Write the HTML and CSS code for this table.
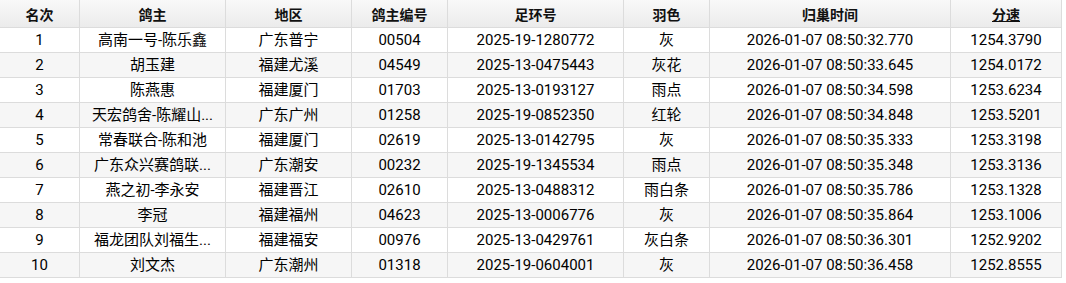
FILE: index.html
```html
<!DOCTYPE html>
<html lang="zh-CN">
<head>
<meta charset="utf-8">
<title>归巢成绩</title>
<link rel="stylesheet" href="styles.css">
</head>
<body>
<table class="grid">
  <colgroup>
    <col class="c-rank"><col class="c-owner"><col class="c-area"><col class="c-no">
    <col class="c-ring"><col class="c-color"><col class="c-time"><col class="c-speed">
  </colgroup>
  <thead>
    <tr>
      <th>名次</th><th>鸽主</th><th>地区</th><th>鸽主编号</th><th>足环号</th><th>羽色</th><th>归巢时间</th><th class="sorted">分速</th>
    </tr>
  </thead>
  <tbody>
    <tr><td>1</td><td>高南一号-陈乐鑫</td><td>广东普宁</td><td>00504</td><td>2025-19-1280772</td><td>灰</td><td>2026-01-07 08:50:32.770</td><td>1254.3790</td></tr>
    <tr><td>2</td><td>胡玉建</td><td>福建尤溪</td><td>04549</td><td>2025-13-0475443</td><td>灰花</td><td>2026-01-07 08:50:33.645</td><td>1254.0172</td></tr>
    <tr><td>3</td><td>陈燕惠</td><td>福建厦门</td><td>01703</td><td>2025-13-0193127</td><td>雨点</td><td>2026-01-07 08:50:34.598</td><td>1253.6234</td></tr>
    <tr><td>4</td><td>天宏鸽舍-陈耀山...</td><td>广东广州</td><td>01258</td><td>2025-19-0852350</td><td>红轮</td><td>2026-01-07 08:50:34.848</td><td>1253.5201</td></tr>
    <tr><td>5</td><td>常春联合-陈和池</td><td>福建厦门</td><td>02619</td><td>2025-13-0142795</td><td>灰</td><td>2026-01-07 08:50:35.333</td><td>1253.3198</td></tr>
    <tr><td>6</td><td>广东众兴赛鸽联...</td><td>广东潮安</td><td>00232</td><td>2025-19-1345534</td><td>雨点</td><td>2026-01-07 08:50:35.348</td><td>1253.3136</td></tr>
    <tr><td>7</td><td>燕之初-李永安</td><td>福建晋江</td><td>02610</td><td>2025-13-0488312</td><td>雨白条</td><td>2026-01-07 08:50:35.786</td><td>1253.1328</td></tr>
    <tr><td>8</td><td>李冠</td><td>福建福州</td><td>04623</td><td>2025-13-0006776</td><td>灰</td><td>2026-01-07 08:50:35.864</td><td>1253.1006</td></tr>
    <tr><td>9</td><td>福龙团队刘福生...</td><td>福建福安</td><td>00976</td><td>2025-13-0429761</td><td>灰白条</td><td>2026-01-07 08:50:36.301</td><td>1252.9202</td></tr>
    <tr><td>10</td><td>刘文杰</td><td>广东潮州</td><td>01318</td><td>2025-19-0604001</td><td>灰</td><td>2026-01-07 08:50:36.458</td><td>1252.8555</td></tr>
  </tbody>
</table>
</body>
</html>
```
FILE: styles.css
```css
html, body {
  margin: 0;
  padding: 0;
  background: #ffffff;
}

body {
  font-family: Roboto, "Noto Sans CJK SC", sans-serif;
  color: #000000;
}

.grid {
  border-collapse: separate;
  border-spacing: 0;
  table-layout: fixed;
  width: 1062px;
}

.c-rank { width: 80px; }
.c-owner { width: 146px; }
.c-area { width: 126px; }
.c-no { width: 96px; }
.c-ring { width: 176px; }
.c-color { width: 86px; }
.c-time { width: 241px; }
.c-speed { width: 111px; }

.grid th,
.grid td {
  box-sizing: border-box;
  padding: 0 2px;
  text-align: center;
  vertical-align: middle;
  white-space: nowrap;
  overflow: hidden;
  border-right: 1px solid #dcdcdc;
  border-bottom: 1px solid #dcdcdc;
}

.grid th {
  height: 28px;
  font-size: 14px;
  font-weight: bold;
  color: #111111;
  background: linear-gradient(#f9f9f9, #ebebeb);
}

.grid th.sorted {
  text-decoration: underline;
}

.grid td {
  height: 25px;
  font-size: 15px;
  line-height: 18px;
}

.grid tbody tr:nth-child(even) td {
  background: #f6f6f6;
}
```
